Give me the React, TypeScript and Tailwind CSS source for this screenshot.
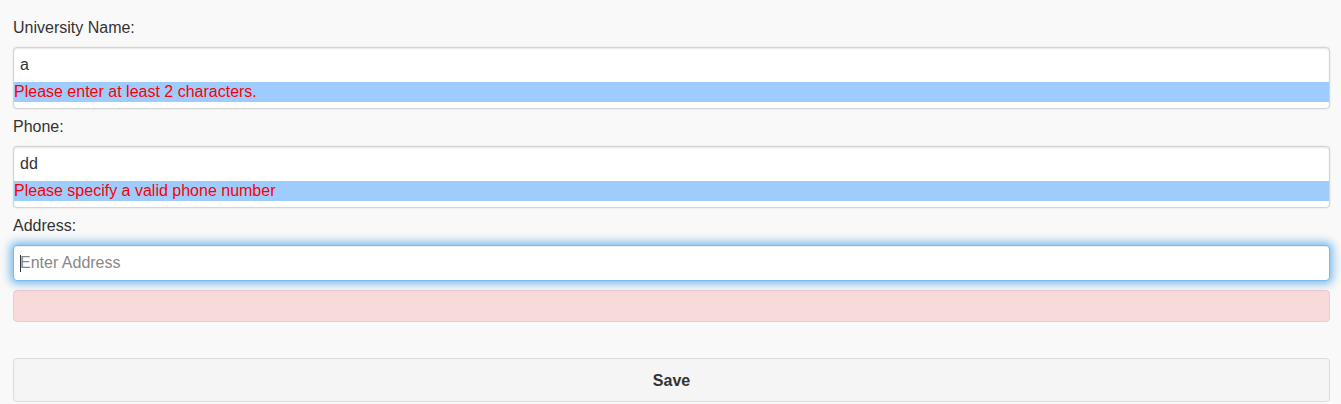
import React from "react";

const font = { fontFamily: '"Liberation Sans", Arial, Helvetica, sans-serif' };

function ErrorBox({ value, error }: { value: string; error: string }) {
  return (
    <div className="mb-[7px] flex flex-col rounded-[4px] border border-[#d4d4d4] bg-white pb-[6px] shadow-[inset_0_1px_2px_rgba(0,0,0,0.1),0_0_2px_rgba(0,0,0,0.12)]">
      <input
        readOnly
        value={value}
        className="h-[34px] w-full bg-transparent px-[6px] text-[16px] text-[#333] outline-none"
        style={font}
      />
      <label className="block bg-[#9eccff] text-[16px] leading-[20px] text-[#ff0000]">{error}</label>
    </div>
  );
}

export default function App() {
  return (
    <div className="min-h-[404px] bg-[#f9f9f9] pl-[13px] pr-[11px] pt-[17px] text-[16px] text-[#333]" style={font}>
      <div className="mb-[8px] leading-[22px]">University Name:</div>
      <ErrorBox value="a" error="Please enter at least 2 characters." />
      <div className="mb-[8px] leading-[22px]">Phone:</div>
      <ErrorBox value="dd" error="Please specify a valid phone number" />
      <div className="mb-[8px] leading-[22px]">Address:</div>
      <div className="relative">
        <input
          placeholder="Enter Address"
          className="h-[36px] w-full rounded-[4px] border border-[#7cbbe6] bg-white px-[6px] text-[16px] text-[#333] outline-none placeholder:text-[#888] shadow-[inset_0_1px_1px_rgba(0,0,0,0.075),0_0_8px_3px_rgba(102,175,233,0.85)]"
          style={font}
        />
        <span className="absolute left-[7px] top-[10px] h-[17px] w-px bg-[#333]" />
      </div>
      <div className="mt-[9px] h-[32px] rounded-[4px] border border-[#f5c6cb] bg-[#f8dadb]" />
      <button
        className="mt-[36px] flex h-[44px] w-full items-center justify-center rounded-[4px] border border-[#dcdcdc] bg-[#f5f5f5] pt-px text-[16px] font-bold text-[#333]"
        style={font}
      >
        Save
      </button>
    </div>
  );
}
